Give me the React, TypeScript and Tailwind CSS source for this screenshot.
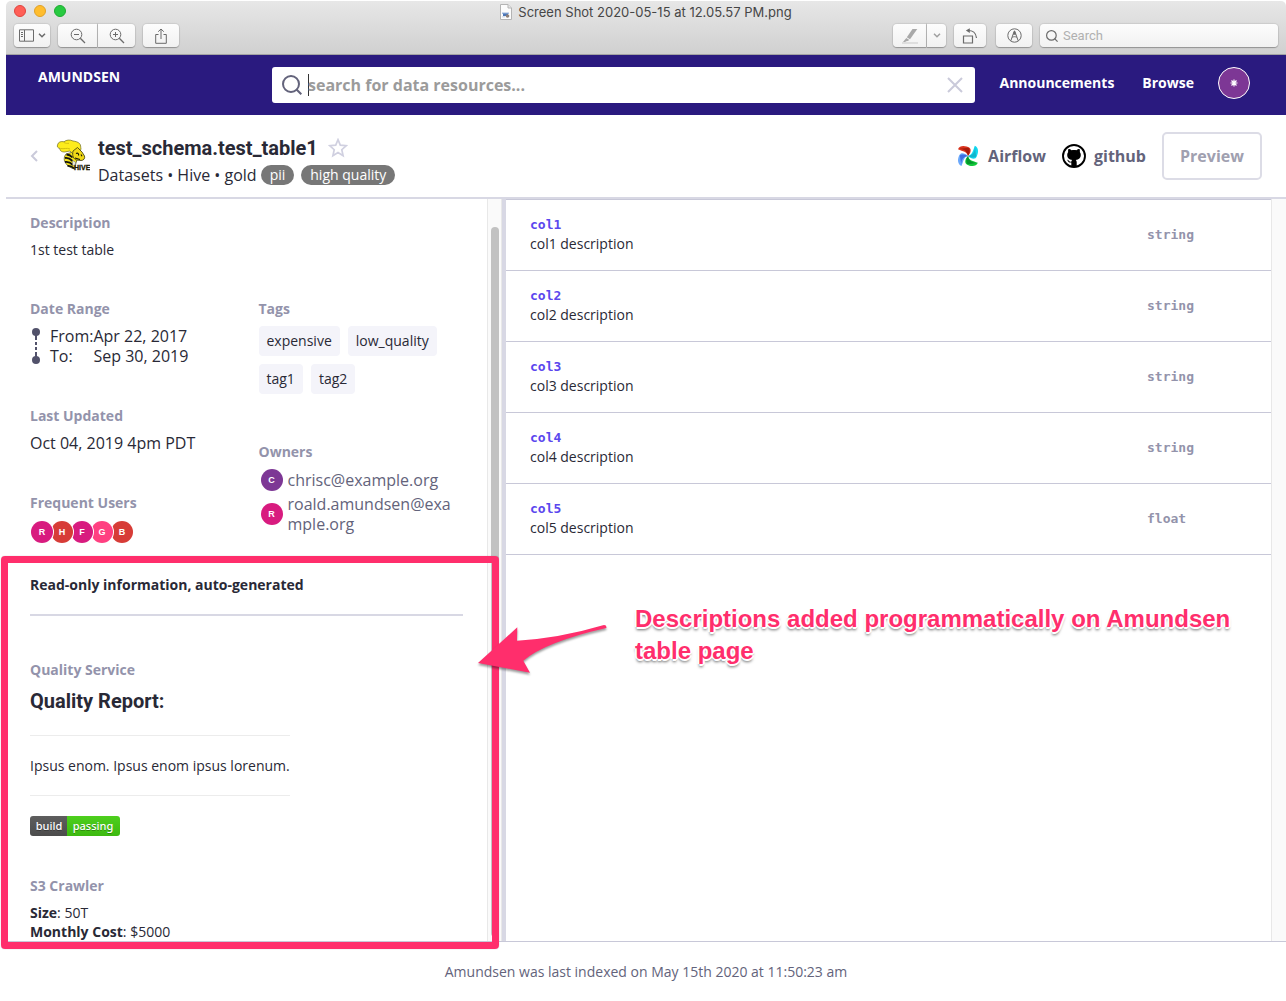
import React from "react";

const sans = "font-['Open_Sans',sans-serif]";

const columns = [
  { name: "col1", description: "col1 description", type: "string" },
  { name: "col2", description: "col2 description", type: "string" },
  { name: "col3", description: "col3 description", type: "string" },
  { name: "col4", description: "col4 description", type: "string" },
  { name: "col5", description: "col5 description", type: "float" },
];

const frequentUsers = [
  { initial: "R", color: "bg-[#d81b7f]" },
  { initial: "H", color: "bg-[#d73c37]" },
  { initial: "F", color: "bg-[#d81b7f]" },
  { initial: "G", color: "bg-[#ff4081]" },
  { initial: "B", color: "bg-[#d73c37]" },
];

const owners = [
  { initial: "C", email: "chrisc@example.org", color: "bg-[#7d3795]" },
  { initial: "R", email: "roald.amundsen@example.org", color: "bg-[#d81b7f]" },
];

const toolButton =
  "flex h-[23px] items-center justify-center bg-linear-to-b from-[#fdfdfd] to-[#f1f1f1] text-[#6b6b6b] shadow-[0_0_1px_1px_rgba(0,0,0,0.08),0_1px_1px_rgba(0,0,0,0.25)]";

function FileIcon() {
  return (
    <svg className="h-4 w-3" viewBox="0 0 12 16" aria-hidden="true">
      <path d="M.5.5h7.500l3.500 3.500v11.500H.5z" fill="#fcfcfc" stroke="#b4b4b4" />
      <path d="M8 .5V4h3.500" fill="#e8e8e8" stroke="#b4b4b4" />
      <path d="M2 8.500h7v1.500H2z" fill="#9fb9df" />
      <path d="M3 9.500h5v2.500H3z" fill="#4b76b8" />
      <circle cx="7.500" cy="12" r="1.800" fill="#8e8078" />
      <path d="M2 12h3v1.500H2z" fill="#d9e0ea" />
    </svg>
  );
}

function SidebarIcon() {
  return (
    <svg className="h-[13px] w-[15px]" viewBox="0 0 15 13" fill="none" stroke="currentColor" aria-hidden="true">
      <path d="M.5 .8h14v11.400H.5zM5.500 1v11" />
      <path d="M2 3.500h2M2 5.500h2M2 7.500h2" />
    </svg>
  );
}

function ChevronDown() {
  return (
    <svg className="h-[5px] w-2" viewBox="0 0 8 5" fill="none" stroke="currentColor" strokeWidth="1.500" aria-hidden="true">
      <path d="M1 .8l3 3 3-3" />
    </svg>
  );
}

function ZoomIcon({ plus = false }: { plus?: boolean }) {
  return (
    <svg className="size-4" viewBox="0 0 16 16" fill="none" stroke="currentColor" aria-hidden="true">
      <circle cx="6.500" cy="6.500" r="5.300" />
      <path d="M10.300 10.300l4.700 4.700" strokeWidth="1.300" />
      <path d={plus ? "M4 6.500h5M6.500 4v5" : "M4 6.500h5"} />
    </svg>
  );
}

function ShareIcon() {
  return (
    <svg className="h-4 w-3" viewBox="0 0 12 16" fill="none" stroke="currentColor" aria-hidden="true">
      <path d="M3.500 6.500H.7v8.800h10.600V6.500H8.500" />
      <path d="M6 11V1M3.200 3.700L6 1l2.800 2.700" />
    </svg>
  );
}

function MarkerIcon() {
  return (
    <svg className="h-4 w-[18px]" viewBox="0 0 18 16" aria-hidden="true">
      <path d="M11.500 1h4.800L9 11.300 5.800 9.300z" fill="#a9a9a9" />
      <path d="M5.300 10l3 1.900-1.600 1.200-1.600.1-1 .9H2z" fill="#a9a9a9" />
      <path d="M1 15h16" stroke="#c9c9c9" strokeWidth="1" />
    </svg>
  );
}

function RotateIcon() {
  return (
    <svg className="size-4" viewBox="0 0 16 16" fill="none" stroke="currentColor" strokeWidth="1.200" aria-hidden="true">
      <path d="M1.500 8h9v7h-9z" />
      <path d="M6 2.500c4.500-.3 8 2.500 8.500 7.500" />
      <path d="M7.800.3v4.600L3.800 2.600z" fill="currentColor" stroke="none" />
    </svg>
  );
}

function MarkupIcon() {
  return (
    <svg className="size-[15px]" viewBox="0 0 15 15" fill="none" stroke="currentColor" aria-hidden="true">
      <circle cx="7.500" cy="7.500" r="6.700" />
      <path d="M3.800 12.800L7.200 3.200h.6l3.400 9.600M5.300 9.300c1.300-.8 3.100-.8 4.400 0" />
      <path d="M6 6.800l1.200-4h.6l1.200 4z" fill="currentColor" stroke="none" />
    </svg>
  );
}

function MagnifierIcon({ className }: { className: string }) {
  return (
    <svg className={className} viewBox="0 0 20 20" fill="none" stroke="currentColor" aria-hidden="true">
      <circle cx="9" cy="9" r="8" />
      <path d="M14.300 14.300l5 5" />
    </svg>
  );
}

function HiveLogo() {
  return (
    <svg className="h-[34px] w-[34px] shrink-0" viewBox="0 0 34 34" role="img" aria-label="Hive">
      <path d="M10 15c-2 2.500-2.500 6-.5 9 2 3 5 5 9 6l1.500-6 2-6-5-5z" fill="#f6e51d" stroke="#2b2a12" strokeWidth=".6" />
      <path d="M9 19c3-.5 5 .5 7.500 3M9 23c3-.5 5.500.5 8 3M11.500 27c2.500-.3 4.500.5 6.500 2.300M10.500 15.500c2.500 0 4 .8 6 3" fill="none" stroke="#111" strokeWidth="1.800" />
      <path d="M1.500 6C2 3 5 2 8 2.800 10 .8 14 .5 17 2c2.500.3 5 1 6.500 2.500 1.500 1.500 1 3.500 1.500 5.500l-3 6-5-1-3-3-5.500 1c-3 0-5-1.500-4.500-3.500C1.500 9 1 7.500 1.500 6z" fill="#fdec1c" stroke="#6d6a2a" strokeWidth=".7" />
      <path d="M4.500 9.500c3.500.8 6-1 9.500.5M8 3.500c2 1 3 1 5 .8" fill="none" stroke="#cdb90d" strokeWidth=".9" />
      <path d="M17 12l4.500-3.500L26 13l2.500 4c.8 2.500-1 4.500-3.500 4.500l-4.500-.5c-3-1-4.500-4-3.500-9z" fill="#f0d816" stroke="#39370f" strokeWidth=".8" />
      <path d="M20 14.500c2-1 3 .5 2.500 2M25 15.500l1 1.800M19 19l5 1.500" fill="none" stroke="#171709" strokeWidth="1.100" />
      <path d="M16.500 21.500l3 1.500v5l-3-2z" fill="#e8e7dc" stroke="#555" strokeWidth=".4" />
      <text x="18" y="31" className="font-['Liberation_Sans',sans-serif]" fontSize="7" fontWeight="700" fill="#1a1804" stroke="#1a1804" strokeWidth=".3">
        HIVE
      </text>
    </svg>
  );
}

function AirflowLogo() {
  return (
    <svg className="size-[22px]" viewBox="0 0 22 22" aria-hidden="true">
      <path d="M11 11C10 6.500 6 6.500 1 4.200 2.500 0 8.500.2 12.500 2.800c2 1.500 1.500 5.200-1.500 8.200z" fill="#d9321c" />
      <path d="M2.500 3.800C6 4.500 10 5 11 11c1.500-2.500 2.500-6 .5-8.200z" fill="#a81a0c" />
      <path d="M11 11c4.500-1 5-5.500 6.800-10.200 4.200 1.700 4 7.500 1.400 11.700-1.500 2-5.200 1.500-8.200-1.500z" fill="#11d8f0" />
      <path d="M18 2c-.5 4.500-1 8-7 9 3 1.500 6 2.300 8.200.5z" fill="#12b5cc" />
      <path d="M11 11c1 4.500 5 5 9.800 6.800-1.500 4.200-7.300 4-11.300 1.400-2-1.500-1.500-5.200 1.500-8.200z" fill="#12c83a" />
      <path d="M19.500 18C16 17.300 12 17 11 11c-1.500 2.500-2.500 6-.5 8.200z" fill="#04952c" />
      <path d="M11 11c-4.500 1-4.500 5.500-6.500 10C.2 19.200.2 13.500 2.800 9.500c1.500-2 5.200-1.500 8.200 1.500z" fill="#6aa8fb" />
      <path d="M4.300 19.500C4.500 16 5 12 11 11c-2.500-1.500-6-2.500-8.200-.5z" fill="#3e6fe0" />
    </svg>
  );
}

function GithubLogo() {
  return (
    <svg className="size-6" viewBox="0 0 24 24" aria-hidden="true">
      <circle cx="12" cy="12" r="11" fill="#fff" stroke="#000" strokeWidth="1.900" />
      <path
        d="M9.300 22.500v-4c-2.300.5-3-.7-3.500-1.700-.3-.5-.7-.8-1-1.100 1.500-.3 2 1 2.600 1.600.6.600 1.300.5 2 .2.100-.7.400-1.200.8-1.500-3-.4-5-1.700-5-5.200 0-1.100.4-2 1-2.700-.2-.8-.2-2 .3-3.100 1.200 0 2.200.6 3.100 1.200 1.500-.4 3.300-.4 4.800 0 .9-.6 1.900-1.200 3.100-1.200.5 1.100.5 2.300.3 3.100.6.700 1 1.600 1 2.700 0 3.500-2 4.800-5 5.200.6.500.9 1.300.9 2.300v4.200z"
        fill="#000"
      />
    </svg>
  );
}

function RangeMarker() {
  return (
    <svg className="h-9 w-2 shrink-0" viewBox="0 0 8 36" fill="#52526b" aria-hidden="true">
      <circle cx="4" cy="4" r="4" />
      <circle cx="4" cy="32" r="4" />
      <path d="M3 7h2v5H3zM3 14h2v3H3zM3 19h2v3H3zM3 24h2v5H3z" />
    </svg>
  );
}

function Initial({ initial, color }: { initial: string; color: string }) {
  return (
    <span
      className={`${color} flex size-[22px] shrink-0 items-center justify-center rounded-full font-['Liberation_Sans',sans-serif] text-[9px] leading-none font-bold text-white`}
    >
      {initial}
    </span>
  );
}

function Section({ title, children }: { title: string; children: React.ReactNode }) {
  return (
    <section>
      <h2 className="mb-[7px] text-sm leading-5 font-bold text-[#9393ab]">{title}</h2>
      {children}
    </section>
  );
}

function TitleBar() {
  return (
    <header className="rounded-t-[5px] border-b border-[#a3a3a3] bg-linear-to-b from-[#e7e7e7] to-[#d0d0d0] pb-[7px] font-[Roboto,sans-serif]">
      <div className="flex h-[23px] items-start px-2 pt-[3px]">
        <div className="flex flex-1 gap-2 pt-px">
          <button aria-label="Close" className="size-3 rounded-full border border-[#e0443e] bg-[#ff5f57]" />
          <button aria-label="Minimize" className="size-3 rounded-full border border-[#e0a127] bg-[#ffbd2e]" />
          <button aria-label="Full screen" className="size-3 rounded-full border border-[#1eab31] bg-[#28ca41]" />
        </div>
        <div className="flex items-center gap-[6px] text-[#464646]">
          <FileIcon />
          <h1 className="font-[Inter,sans-serif] text-[13px] leading-4">Screen Shot 2020-05-15 at 12.05.57 PM.png</h1>
        </div>
        <div className="flex-1" />
      </div>
      <div className="flex items-center gap-2 px-2">
        <button aria-label="Sidebar" className={`${toolButton} w-9 gap-1 rounded-[4px]`}>
          <SidebarIcon />
          <ChevronDown />
        </button>
        <div className="flex gap-px">
          <button aria-label="Zoom out" className={`${toolButton} w-[39px] rounded-l-[4px]`}>
            <ZoomIcon />
          </button>
          <button aria-label="Zoom in" className={`${toolButton} w-[37px] rounded-r-[4px]`}>
            <ZoomIcon plus />
          </button>
        </div>
        <button aria-label="Share" className={`${toolButton} w-9 rounded-[4px]`}>
          <ShareIcon />
        </button>
        <div className="ml-auto flex gap-px">
          <button aria-label="Highlight" className={`${toolButton} w-[33px] rounded-l-[4px]`}>
            <MarkerIcon />
          </button>
          <button aria-label="Highlight options" className={`${toolButton} w-[19px] rounded-r-[4px] text-[#a0a0a0]`}>
            <ChevronDown />
          </button>
        </div>
        <button aria-label="Rotate" className={`${toolButton} w-8 rounded-[4px]`}>
          <RotateIcon />
        </button>
        <button aria-label="Markup" className={`${toolButton} ml-[2px] w-9 rounded-[4px]`}>
          <MarkupIcon />
        </button>
        <label className={`${toolButton} w-[238px] gap-[5px] rounded-[4px] px-[6px]`}>
          <MagnifierIcon className="size-3 stroke-2" />
          <input
            type="search"
            aria-label="Search document"
            placeholder="Search"
            className="min-w-0 flex-1 bg-transparent font-[Roboto,sans-serif] text-[13px] outline-none placeholder:text-[#b0b0b0]"
          />
        </label>
      </div>
    </header>
  );
}

function NavBar() {
  return (
    <nav className="flex items-start bg-[#2a1a7f] px-8 pt-3 pb-3 text-sm font-bold text-white">
      <a href="#home" className="w-[234px] shrink-0 leading-5">
        AMUNDSEN
      </a>
      <label className="flex h-9 min-w-0 flex-1 items-center rounded-[3px] bg-white px-[10px] text-base text-[#63637b]">
        <MagnifierIcon className="size-5 shrink-0 stroke-2" />
        <span className="ml-[6px] h-[22px] w-px shrink-0 bg-[#333]" />
        <input
          type="text"
          aria-label="Search for data resources"
          placeholder="search for data resources..."
          className="-ml-px min-w-0 flex-1 bg-transparent font-bold outline-none placeholder:text-[#9b9b9b]"
        />
        <button aria-label="Clear search" className="text-[#cacada]">
          <svg className="size-5" viewBox="0 0 20 20" stroke="currentColor" strokeWidth="2" aria-hidden="true">
            <path d="M3 3l14 14M17 3L3 17" />
          </svg>
        </button>
      </label>
      <div className="flex h-8 items-center pr-1 pl-6">
        <a href="#announcements">Announcements</a>
        <a href="#browse" className="ml-7">
          Browse
        </a>
        <button
          aria-label="Account"
          className="ml-6 flex size-8 items-center justify-center rounded-full border border-white bg-[#7d3795]"
        >
          <svg className="size-2" viewBox="0 0 8 8" stroke="#fff" strokeWidth="1.200" aria-hidden="true">
            <path d="M4 .5v7M.5 4h7M1.500 1.500l5 5M6.500 1.500l-5 5" />
          </svg>
        </button>
      </div>
    </nav>
  );
}

function TableHeader() {
  return (
    <div className="flex h-[84px] items-center border-b-2 border-[#d8d8e4] px-6 pb-px">
      <a href="#back" aria-label="Back" className="w-[26px] shrink-0 text-[#cacada]">
        <svg className="h-3 w-2" viewBox="0 0 8 12" fill="none" stroke="currentColor" strokeWidth="2" aria-hidden="true">
          <path d="M7 1L2 6l5 5" />
        </svg>
      </a>
      <HiveLogo />
      <div className="ml-2 flex-1 pt-[10px] text-[#292936]">
        <div className="flex items-center gap-[10px]">
          <h1 className="font-[Roboto,sans-serif] text-xl leading-7 font-bold">test_schema.test_table1</h1>
          <button aria-label="Bookmark" className="text-[#d0d0e0]">
            <svg className="size-5" viewBox="0 0 20 20" fill="none" stroke="currentColor" strokeWidth="1.700" aria-hidden="true">
              <path d="M10 1.700l2.300 5.500 6 .5-4.500 4 1.300 6-5.100-3.200-5.100 3.200 1.300-6-4.500-4 6-.5z" />
            </svg>
          </button>
        </div>
        <div className="flex items-center pt-px text-base leading-6">
          <span>Datasets • Hive • gold</span>
          <a href="#pii" className="ml-1 rounded-full bg-[#777] px-[9px] text-sm leading-5 text-white">
            pii
          </a>
          <a href="#high-quality" className="ml-[7px] rounded-full bg-[#777] px-[9px] text-sm leading-5 text-white">
            high quality
          </a>
        </div>
      </div>
      <div className="flex items-center gap-4 font-bold text-[#63637b]">
        <a href="#airflow" className="flex items-center gap-[9px]">
          <AirflowLogo />
          Airflow
        </a>
        <a href="#github" className="flex items-center gap-2">
          <GithubLogo />
          github
        </a>
        <button className="h-12 w-[100px] rounded-[5px] border-2 border-[#dcdce6] text-[#a0a0b0]">Preview</button>
      </div>
    </div>
  );
}

function DetailsPanel() {
  return (
    <div className="relative z-10 min-w-0 flex-1 px-6 pt-[14px] text-[#292936]">
      <Section title="Description">
        <p className="text-sm leading-5">1st test table</p>
      </Section>
      <div className="mt-[39px] grid grid-cols-2 gap-6">
        <div className="flex flex-col gap-10">
          <Section title="Date Range">
            <div className="flex items-center gap-[10px] pl-[2px]">
              <RangeMarker />
              <dl className="grid grid-cols-[auto_auto] leading-5">
                <dt>From:</dt>
                <dd>Apr 22, 2017</dd>
                <dt>To:</dt>
                <dd>Sep 30, 2019</dd>
              </dl>
            </div>
          </Section>
          <Section title="Last Updated">
            <p className="leading-5">Oct 04, 2019 4pm PDT</p>
          </Section>
          <Section title="Frequent Users">
            <div className="flex">
              {frequentUsers.map((user, i) => (
                <span key={user.initial} className="relative -mr-1 flex rounded-full bg-white p-px" style={{ zIndex: 5 - i }}>
                  <Initial {...user} />
                </span>
              ))}
            </div>
          </Section>
        </div>
        <div className="flex flex-col gap-12">
          <Section title="Tags">
            <div className="flex flex-wrap gap-2">
              {["expensive", "low_quality", "tag1", "tag2"].map((tag) => (
                <a key={tag} href={`#${tag}`} className="rounded-[4px] bg-[#f4f4fa] px-2 py-[5px] text-sm leading-5">
                  {tag}
                </a>
              ))}
            </div>
          </Section>
          <Section title="Owners">
            <ul className="flex flex-col gap-1 pt-px pl-[2px] text-[#63637b]">
              {owners.map((owner) => (
                <li key={owner.email} className="flex items-center gap-[5px] leading-5">
                  <span className="-my-px">
                    <Initial initial={owner.initial} color={owner.color} />
                  </span>
                  <a href={`#${owner.initial}`} className="break-all">
                    {owner.email}
                  </a>
                </li>
              ))}
            </ul>
          </Section>
        </div>
      </div>

      <div className="relative mt-3 pt-[19px]">
        <div className="pointer-events-none absolute top-0 -right-9 -bottom-2 -left-[29px] rounded-[4px] border-7 border-[#ff2e6c] shadow-[0_0_1px_rgba(0,0,0,0.35)]" />
        <h2 className="border-b-2 border-[#d8d8e4] pb-[19px] text-sm leading-5 font-bold">
          Read-only information, auto-generated
        </h2>
        <div className="mt-11 flex flex-col gap-10">
          <Section title="Quality Service">
            <div className="w-[260px]">
              <h3 className="font-[Roboto,sans-serif] text-xl leading-7 font-bold">Quality Report:</h3>
              <p className="my-5 border-y border-[#ececec] py-5 text-sm leading-[19px] whitespace-nowrap">
                Ipsus enom. Ipsus enom ipsus lorenum.
              </p>
              <div className="flex w-fit overflow-hidden rounded-[3px] font-['Noto_Sans',sans-serif] text-[11px] leading-5 font-medium text-white text-shadow-[0_1px_rgba(0,0,0,0.3)]">
                <span className="w-[37px] bg-linear-to-b from-[#5e5e5e] to-[#4c4c4c] pl-px text-center">build</span>
                <span className="w-[53px] bg-linear-to-b from-[#4dcf1d] to-[#3db910] pr-px text-center">passing</span>
              </div>
            </div>
          </Section>
          <Section title="S3 Crawler">
            <p className="text-sm leading-[19px]">
              <strong>Size</strong>: 50T
              <br />
              <strong>Monthly Cost</strong>: $5000
            </p>
          </Section>
        </div>
      </div>
    </div>
  );
}

function ColumnsPanel() {
  return (
    <div className="min-w-0 flex-1 border-t border-[#c8c8d8]">
      <table className="w-full text-left">
        <tbody>
          {columns.map((column) => (
            <tr key={column.name} className="border-b border-[#c8c8d8]">
              <td className="py-4 pl-6">
                <div className="font-['DejaVu_Sans_Mono',monospace] text-[13px] leading-[18px] font-bold text-[#5b47ee]">
                  {column.name}
                </div>
                <div className="text-sm leading-5 text-[#292936]">{column.description}</div>
              </td>
              <td className="w-[124px] font-['DejaVu_Sans_Mono',monospace] text-[13px] font-bold text-[#9393ab]">
                {column.type}
              </td>
            </tr>
          ))}
        </tbody>
      </table>
      <p className="relative z-20 mt-12 ml-[129px] font-['Liberation_Sans',sans-serif] text-2xl leading-8 font-bold text-[#ff2e6c] [text-shadow:-2px_0_#fff,2px_0_#fff,0_-2px_#fff,0_2px_#fff,-1px_-1px_#fff,1px_1px_#fff,0_3px_3px_rgba(0,0,0,0.6)]">
        Descriptions added programmatically on Amundsen table page
        <svg
          className="absolute top-3 -left-[165px] h-[65px] w-36 drop-shadow-[0_2px_1px_rgba(0,0,0,0.4)]"
          viewBox="470 615 144 65"
          aria-hidden="true"
        >
          <path
            d="M478 663L517.300 627.300 517 640.700Q560 638 603 625.200Q607 624.600 606.300 628Q545 642 523.300 660.700L530 672.700Z"
            fill="#ff2e6c"
          />
        </svg>
      </p>
    </div>
  );
}

export default function App() {
  return (
    <div className={`${sans} flex min-h-screen flex-col bg-white pt-px pl-[6px] text-base`}>
      <TitleBar />
      <NavBar />
      <TableHeader />
      <main className="flex flex-1 border-b border-[#c8c8d8]">
        <div className="flex w-[496px] shrink-0">
          <DetailsPanel />
          <div className="w-[15px] border-x border-[#e8e8e8] bg-[#fafafa] px-[3px] pt-7 pb-1">
            <div className="h-full w-2 rounded-full bg-[#c2c2c2]" />
          </div>
        </div>
        <div className="w-1 shrink-0 bg-[#d8d8e4]" />
        <ColumnsPanel />
        <div className="w-[15px] shrink-0 border-l border-[#e8e8e8] bg-[#fafafa]" />
      </main>
      <footer className="flex h-[59px] items-center justify-center rounded-bl-[5px] text-sm text-[#63637b]">
        Amundsen was last indexed on May 15th 2020 at 11:50:23 am
      </footer>
    </div>
  );
}
